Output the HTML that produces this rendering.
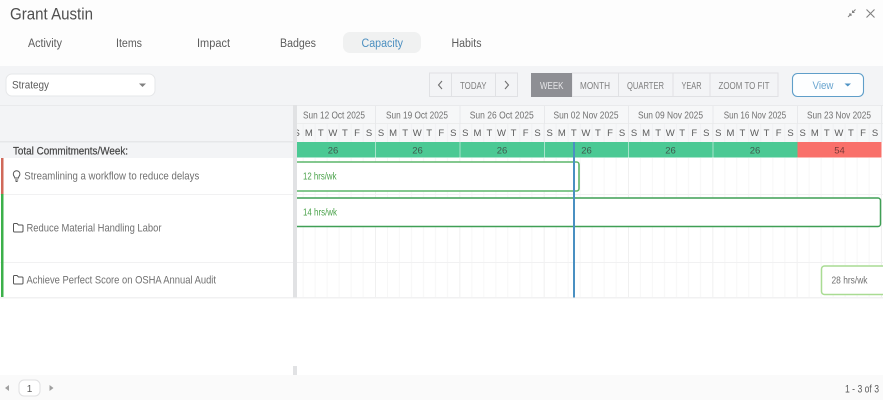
<!DOCTYPE html>
<html>
<head>
<meta charset="utf-8">
<title>Grant Austin</title>
<style>
html,body{margin:0;padding:0;background:#fff;width:883px;height:400px;overflow:hidden}
svg{display:block;filter:blur(0.3px)}
text{font-family:"Liberation Sans",sans-serif;fill:#5c5c5c}
</style>
</head>
<body>
<svg width="883" height="400" viewBox="0 0 883 400" xmlns="http://www.w3.org/2000/svg">
<defs>
<pattern id="grid" patternUnits="userSpaceOnUse" x="290.67" y="0" width="84.33" height="400">
<rect x="12" width="1" height="400" fill="#f7f7f7"/><rect x="24" width="1" height="400" fill="#f7f7f7"/><rect x="36" width="1" height="400" fill="#f7f7f7"/><rect x="48" width="1" height="400" fill="#f7f7f7"/><rect x="60" width="1" height="400" fill="#f7f7f7"/><rect x="72" width="1" height="400" fill="#f7f7f7"/><rect x="0" width="1" height="400" fill="#f0f0f0"/>
</pattern>
<pattern id="hgrid" patternUnits="userSpaceOnUse" x="290.67" y="0" width="84.33" height="400">
<rect x="12" width="1" height="400" fill="#f0f1f3"/><rect x="24" width="1" height="400" fill="#f0f1f3"/><rect x="36" width="1" height="400" fill="#f0f1f3"/><rect x="48" width="1" height="400" fill="#f0f1f3"/><rect x="60" width="1" height="400" fill="#f0f1f3"/><rect x="72" width="1" height="400" fill="#f0f1f3"/><rect x="0" width="1" height="400" fill="#e8e9eb"/>
</pattern>
<clipPath id="tl"><rect x="297" y="100" width="586" height="220"/></clipPath>
</defs>

<rect width="883" height="400" fill="#fff"/>
<rect width="883" height="66" fill="#fdfdfd"/>
<rect y="66" width="883" height="39" fill="#f3f4f6"/>

<!-- title -->
<text x="10" y="19.5" font-size="16.5" textLength="83" lengthAdjust="spacingAndGlyphs" style="fill:#505050">Grant Austin</text>
<g stroke="#808080" stroke-width="1" fill="none">
<path d="M866.5 9.5L874.5 17.5M874.5 9.500L866.500 17.500" stroke-width="1.1"/>
<path d="M855.5 9.5L852.5 12.5M852.500 10.500V12.500H854.500M848 17L851 14M851 16V14H849"/>
</g>

<!-- tabs -->
<rect x="343" y="32" width="78" height="21" rx="7" fill="#f0f1f1"/>
<g font-size="11.5">
<text x="28" y="47" textLength="34" lengthAdjust="spacingAndGlyphs">Activity</text>
<text x="116" y="47" textLength="26" lengthAdjust="spacingAndGlyphs">Items</text>
<text x="197" y="47" textLength="33" lengthAdjust="spacingAndGlyphs">Impact</text>
<text x="280" y="47" textLength="36" lengthAdjust="spacingAndGlyphs">Badges</text>
<text x="361.5" y="47" textLength="41.5" lengthAdjust="spacingAndGlyphs" style="fill:#4b8fc0">Capacity</text>
<text x="451.5" y="47" textLength="30" lengthAdjust="spacingAndGlyphs">Habits</text>
</g>

<!-- dropdown -->
<rect x="6" y="74" width="149" height="22" rx="6" fill="#fff" stroke="#e6e7e9"/>
<text x="12" y="88.5" font-size="11" textLength="37" lengthAdjust="spacingAndGlyphs">Strategy</text>
<path d="M139 83.5h7l-3.5 3.500z" fill="#808080"/>

<!-- nav buttons -->
<g fill="#f3f4f6" stroke="#e0e1e4">
<rect x="429.5" y="73" width="22" height="23.5"/>
<rect x="451.5" y="73" width="44" height="23.5"/>
<rect x="495.5" y="73" width="22" height="23.5"/>
<rect x="572" y="73" width="46.5" height="23.5"/>
<rect x="618.5" y="73" width="54.5" height="23.5"/>
<rect x="673" y="73" width="37" height="23.5"/>
<rect x="710" y="73" width="68" height="23.5"/>
</g>
<rect x="531" y="73" width="41" height="24" fill="#8e8f94"/>
<path d="M442 81l-3.500 4 3.500 4M505 81l3.500 4-3.500 4" fill="none" stroke="#707070" stroke-width="1.100"/>
<g font-size="10.5">
<text x="460" y="89" textLength="26.500" lengthAdjust="spacingAndGlyphs" style="fill:#808080">TODAY</text>
<text x="540" y="89" textLength="23.500" lengthAdjust="spacingAndGlyphs" style="fill:#e6e6e8">WEEK</text>
<text x="580" y="89" textLength="30" lengthAdjust="spacingAndGlyphs" style="fill:#808080">MONTH</text>
<text x="627" y="89" textLength="37" lengthAdjust="spacingAndGlyphs" style="fill:#808080">QUARTER</text>
<text x="681.500" y="89" textLength="20" lengthAdjust="spacingAndGlyphs" style="fill:#808080">YEAR</text>
<text x="718.500" y="89" textLength="51" lengthAdjust="spacingAndGlyphs" style="fill:#808080">ZOOM TO FIT</text>
</g>
<rect x="792.500" y="73.500" width="71" height="23" rx="5" fill="#fdfeff" stroke="#5f9ec9" stroke-width="1.100"/>
<text x="812.500" y="89" font-size="11" textLength="21" lengthAdjust="spacingAndGlyphs" style="fill:#6aa5cf">View</text>
<path d="M844.500 83.500h6.500l-3.250 3z" fill="#4f93c4"/>

<!-- left panel head -->
<rect y="105" width="293" height="37" fill="#f3f4f6"/>
<rect y="105" width="883" height="1" fill="#e9eaec"/>
<rect y="142" width="293" height="16" fill="#f3f4f6"/>
<rect y="141" width="293" height="1.500" fill="#e6e7e9"/>
<text x="13" y="154.500" font-size="11" textLength="115" lengthAdjust="spacingAndGlyphs" stroke="#444" stroke-width="0.2" style="fill:#444">Total Commitments/Week:</text>

<!-- timeline header -->
<rect x="297" y="106" width="586" height="36" fill="#f6f7f8"/>
<rect x="297" y="124" width="586" height="18" fill="url(#hgrid)"/>
<rect x="297" y="123" width="586" height="1" fill="#eceded"/>
<g fill="#e8e9eb">
<rect x="375" y="106" width="1" height="18"/><rect x="459.500" y="106" width="1" height="18"/><rect x="544" y="106" width="1" height="18"/><rect x="628" y="106" width="1" height="18"/><rect x="712.500" y="106" width="1" height="18"/><rect x="797" y="106" width="1" height="18"/><rect x="881" y="106" width="1" height="18"/>
</g>
<g font-size="10.5">
<text x="303" y="118.500" textLength="62" lengthAdjust="spacingAndGlyphs" style="fill:#707070">Sun 12 Oct 2025</text>
<text x="386" y="118.500" textLength="62" lengthAdjust="spacingAndGlyphs" style="fill:#707070">Sun 19 Oct 2025</text>
<text x="469.700" y="118.500" textLength="64" lengthAdjust="spacingAndGlyphs" style="fill:#707070">Sun 26 Oct 2025</text>
<text x="553.500" y="118.500" textLength="65" lengthAdjust="spacingAndGlyphs" style="fill:#707070">Sun 02 Nov 2025</text>
<text x="638" y="118.500" textLength="65" lengthAdjust="spacingAndGlyphs" style="fill:#707070">Sun 09 Nov 2025</text>
<text x="723.700" y="118.500" textLength="62.500" lengthAdjust="spacingAndGlyphs" style="fill:#707070">Sun 16 Nov 2025</text>
<text x="807" y="118.500" textLength="64" lengthAdjust="spacingAndGlyphs" style="fill:#707070">Sun 23 Nov 2025</text>
</g>
<g font-size="9.500" text-anchor="middle" clip-path="url(#tl)">
<text y="136" x="296.700 308.800 320.800 332.900 344.900 357 369">SMTWTFS</text>
<text y="136" x="381 393.100 405.100 417.200 429.200 441.300 453.300">SMTWTFS</text>
<text y="136" x="465.300 477.400 489.400 501.500 513.500 525.600 537.600">SMTWTFS</text>
<text y="136" x="549.700 561.800 573.800 585.900 597.900 610 622">SMTWTFS</text>
<text y="136" x="634 646.100 658.100 670.200 682.200 694.300 706.300">SMTWTFS</text>
<text y="136" x="718.300 730.400 742.400 754.500 766.500 778.600 790.600">SMTWTFS</text>
<text y="136" x="802.700 814.800 826.800 838.900 850.900 863 875">SMTWTFS</text>
</g>

<!-- totals -->
<rect x="297" y="142" width="584.500" height="15.500" fill="#4bc994"/>
<rect x="797.500" y="142" width="84" height="15.500" fill="#f9706a"/>
<g fill="#a6e4ca">
<rect x="375" y="142" width="1" height="15.500"/><rect x="459.500" y="142" width="1" height="15.500"/><rect x="544" y="142" width="1" height="15.500"/><rect x="628" y="142" width="1" height="15.500"/><rect x="712.500" y="142" width="1" height="15.500"/>
</g>
<g font-size="9.500" text-anchor="middle">
<text x="333" y="153.500" style="fill:#3f5a4e">26</text><text x="417.500" y="153.500" style="fill:#3f5a4e">26</text><text x="502" y="153.500" style="fill:#3f5a4e">26</text><text x="586.500" y="153.500" style="fill:#3f5a4e">26</text><text x="670.500" y="153.500" style="fill:#3f5a4e">26</text><text x="755" y="153.500" style="fill:#3f5a4e">26</text><text x="839.500" y="153.500" style="fill:#7a3a38">54</text>
</g>

<!-- rows -->
<rect x="297" y="158" width="586" height="139" fill="url(#grid)"/>
<g fill="#f1f1f2">
<rect y="194" width="883" height="1"/>
<rect y="262" width="883" height="1"/>
<rect y="297" width="883" height="1.500"/>
</g>
<rect x="1" y="158" width="2.500" height="36" fill="#d0695a"/>
<rect x="1" y="194" width="2.500" height="103" fill="#3cb04a"/>

<g font-size="11">
<text x="24.300" y="179.500" textLength="175" lengthAdjust="spacingAndGlyphs" style="fill:#707070">Streamlining a workflow to reduce delays</text>
<text x="26.500" y="231.500" textLength="135" lengthAdjust="spacingAndGlyphs" style="fill:#707070">Reduce Material Handling Labor</text>
<text x="26.500" y="283.500" textLength="189.500" lengthAdjust="spacingAndGlyphs" style="fill:#707070">Achieve Perfect Score on OSHA Annual Audit</text>
</g>
<g fill="none" stroke="#555" stroke-width="1">
<path d="M14.800 178c0-1.500-1.500-2-1.500-4a3.300 3.300 0 0 1 6.600 0c0 2-1.500 2.500-1.500 4zM15 180h3.200M15.600 181.500h2"/>
<path d="M13.500 224.500a1 1 0 0 1 1-1h2.500l1.500 1.500h3.500a1 1 0 0 1 1 1v5a1 1 0 0 1-1 1h-7.500a1 1 0 0 1-1-1z"/>
<path d="M13.500 276.500a1 1 0 0 1 1-1h2.500l1.500 1.500h3.500a1 1 0 0 1 1 1v5a1 1 0 0 1-1 1h-7.500a1 1 0 0 1-1-1z"/>
</g>

<!-- bars -->
<g clip-path="url(#tl)">
<rect x="280" y="162" width="299" height="29" rx="2.500" fill="#fff" stroke="#5cb56a" stroke-width="1.600"/>
<rect x="280" y="198" width="600.500" height="28.500" rx="2.500" fill="#fff" stroke="#3f9f55" stroke-width="1.500"/>
<rect x="821.500" y="266" width="80" height="28.500" rx="3" fill="#fff" stroke="#a9dc93" stroke-width="1.500"/>
</g>
<g font-size="10.5">
<text x="303" y="179.500" textLength="33.500" lengthAdjust="spacingAndGlyphs" style="fill:#4aa24a">12 hrs/wk</text>
<text x="303" y="215.500" textLength="34" lengthAdjust="spacingAndGlyphs" style="fill:#4aa24a">14 hrs/wk</text>
<text x="831.500" y="283.500" textLength="36" lengthAdjust="spacingAndGlyphs" style="fill:#707070">28 hrs/wk</text>
</g>

<!-- today line -->
<rect x="573" y="142" width="2" height="155.500" fill="#4a90c2"/>

<!-- splitter -->
<rect x="293" y="105" width="4" height="192.500" fill="#e1e2e4"/>
<rect x="293" y="366" width="4" height="9" fill="#e1e2e4"/>

<!-- footer -->
<rect y="375" width="883" height="25" fill="#fafafa"/>
<path d="M9 385v6l-4-3z" fill="#a0a0a0"/>
<rect x="19" y="380" width="21" height="16" rx="5" fill="#fff" stroke="#e0e0e2"/>
<text x="29.500" y="392" font-size="10" text-anchor="middle">1</text>
<path d="M49.500 385v6l4-3z" fill="#a0a0a0"/>
<text x="845" y="392.500" font-size="11" textLength="34" lengthAdjust="spacingAndGlyphs">1 - 3 of 3</text>
</svg>
</body>
</html>
